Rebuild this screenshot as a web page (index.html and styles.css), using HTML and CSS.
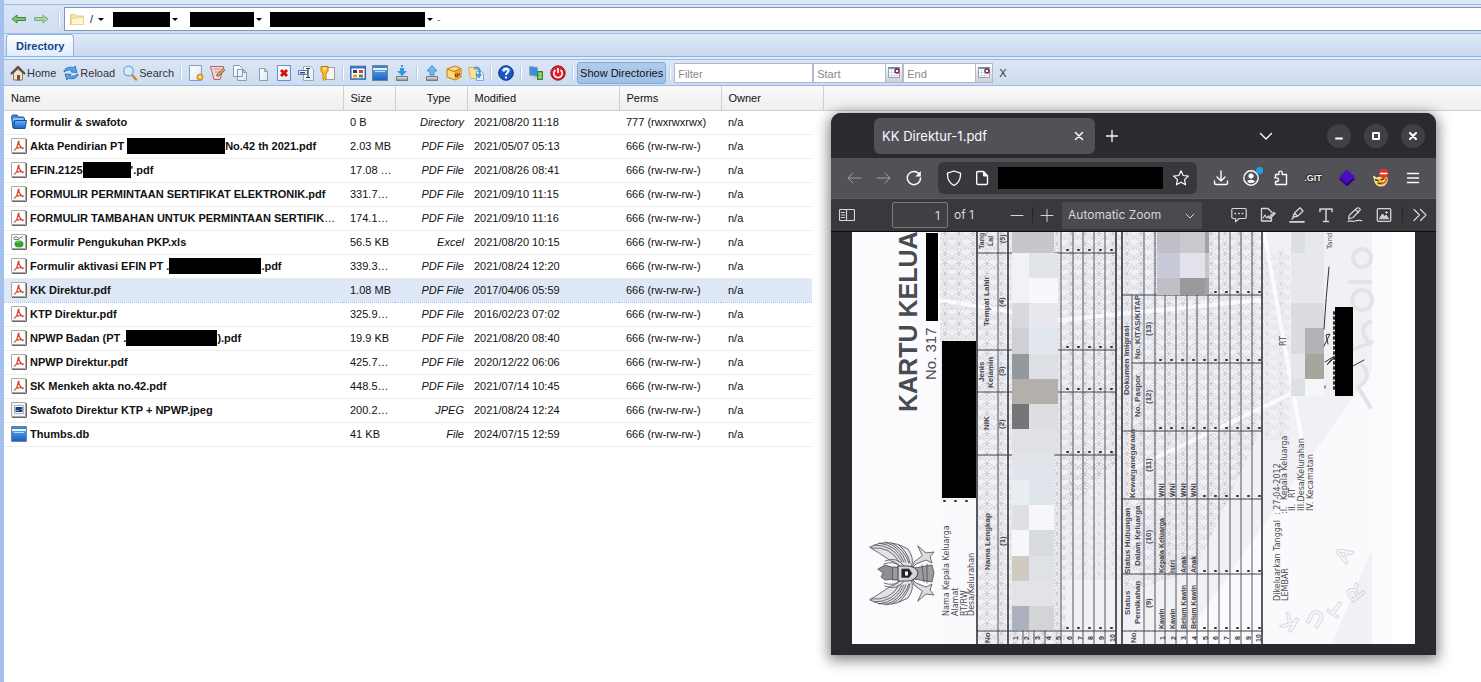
FILE: index.html
```html
<!DOCTYPE html>
<html lang="en">
<head>
<meta charset="utf-8">
<title>Directory</title>
<link rel="stylesheet" href="styles.css">
</head>
<body>
<svg class="defs" aria-hidden="true">
  <defs>
    <linearGradient id="gBlue" x1="0" y1="0" x2="0" y2="1"><stop offset="0" stop-color="#6db4f2"/><stop offset="1" stop-color="#1560c4"/></linearGradient>
    <linearGradient id="gPage" x1="0" y1="0" x2="1" y2="1"><stop offset="0" stop-color="#fff"/><stop offset="1" stop-color="#dfe8f2"/></linearGradient>
    <linearGradient id="gDrive" x1="0" y1="0" x2="0" y2="1"><stop offset="0" stop-color="#eee"/><stop offset="1" stop-color="#8a8a8a"/></linearGradient>
    <pattern id="guilloche" width="14" height="10" patternUnits="userSpaceOnUse"><g fill="none" stroke="#b9bac6" stroke-width=".6"><path d="M0 10a7 7 0 0 1 14 0M2.500 10a4.500 4.500 0 0 1 9 0M5 10a2 2 0 0 1 4 0M-7 5a7 7 0 0 1 14 0M7 5a7 7 0 0 1 14 0"/></g></pattern>
    <symbol id="pdf" viewBox="0 0 16 16"><path fill="#fdfdfd" stroke="#a9a9a9" d="M.5.5h14v14H.5z"/><path fill="none" stroke="#666" d="M1 15.500h14.500V1"/><path fill="none" stroke="#d24a35" stroke-width="1.300" d="M3 12.500c2.500-1.500 4-5 4.300-9M7 3.500h1.500M7.800 4c0 3 2 5.500 4.700 7M4.500 10.500c2.500-1 5-1.200 8-.5"/></symbol>
    <symbol id="window" viewBox="0 0 16 16"><path fill="url(#gBlue)" stroke="#74828f" d="M.5.5h15v15H.5z"/><path fill="#3f83d0" d="M1 1h14v2H1z"/><path fill="#e4f1ff" d="M1 3h14v2H1z"/><path fill="#b9dcff" d="M3 6h10v1H3z"/></symbol>
    <symbol id="cal" viewBox="0 0 14 14"><path fill="#fff" stroke="#8ba0c2" d="M1.500 2.500h11v9h-11z"/><path stroke="#d3dbe8" d="M4.500 3v8M7.500 3v8M2 6.500h10M2 9.500h10"/><path fill="#6b89bd" d="M1 1h12v1.500H1z"/><circle cx="10" cy="5" r="2" fill="#fff" stroke="#8e1230" stroke-width="1.300"/></symbol>
  </defs>
</svg>

<div class="manager">
  <nav class="pathbar" aria-label="Path">
    <button class="icon-btn" aria-label="Back"><svg viewBox="0 0 16 16"><path fill="#7cc474" stroke="#3d8b3b" d="M1 8l5-4v2.500h8.500v3H6V12z"/></svg></button>
    <button class="icon-btn" aria-label="Forward"><svg viewBox="0 0 16 16"><path fill="#a5d6a0" stroke="#79ae79" d="M15 8l-5-4v2.500H1.500v3H10V12z"/></svg></button>
    <span class="sep"></span>
    <div class="path">
      <svg class="path-folder" viewBox="0 0 16 16"><path fill="#f7e7ac" stroke="#e2cd84" d="M1.500 3.500h5l1 1.500h7v8.500h-13z"/><path fill="#fff6d4" stroke="#ead794" d="M2.500 7.500h5l1-1h6v7h-12z"/></svg>
      <span class="root">/</span><i class="caret"></i>
      <span class="mask crumb-a"></span><i class="caret"></i>
      <span class="mask crumb-b"></span><i class="caret"></i>
      <span class="mask crumb-c"></span><i class="caret"></i>
      <span class="dash">-</span>
    </div>
  </nav>

  <div class="tabs"><button class="tab">Directory</button></div>

  <div class="toolbar">
    <button class="tool"><svg viewBox="0 0 16 16"><path fill="#efe4d4" stroke="#8f7a67" d="M3.500 8v7h9V8L8 4z"/><path fill="#8a4b2b" d="M7 10h3v5.500H7z"/><path fill="none" stroke="#5d4637" stroke-width="2" d="M1 9l7-7 7 7"/></svg>Home</button>
    <button class="tool"><svg viewBox="0 0 16 16"><path fill="#5ea9ec" stroke="#1c5fb4" stroke-width=".8" d="M1 7c0-4 6-6 9.500-4L12 1l2 6.500L8 7l1.500-1.500C7 4.500 4 5 1 7zM15 9c0 4-6 6-9.500 4L4 15 2 9l6 .5L6.500 11c2.500 1 5.500 0 8.500-2z"/></svg>Reload</button>
    <button class="tool"><svg viewBox="0 0 16 16"><path stroke="#c98635" stroke-width="2.500" stroke-linecap="round" d="M10 10l4 4.500"/><circle cx="6.500" cy="6" r="4.800" fill="#d8ebfb" stroke="#83aede" stroke-width="1.500"/></svg>Search</button>
    <span class="sep"></span>
    <button class="icon-btn" aria-label="New file"><svg viewBox="0 0 16 16"><path fill="url(#gPage)" stroke="#7ba1cd" d="M1.500.5h12v15h-12z"/><circle cx="12" cy="12" r="3" fill="#f4b52c" stroke="#d3841c"/><circle cx="12" cy="12" r="1" fill="#fff"/></svg></button>
    <button class="icon-btn" aria-label="Edit"><svg viewBox="0 0 16 16"><path fill="#f3d8db" stroke="#b8606b" d="M.5 1.500h13L10 14.500H4z"/><path stroke="#b592a0" d="M4 4h7M5 7h5M6 10h3"/><path stroke="#7a5224" stroke-width="3" d="M7 11l7.500-7"/><path stroke="#f3b356" stroke-width="1.500" d="M7.500 10.500L14.500 4"/></svg></button>
    <button class="icon-btn" aria-label="Copy"><svg viewBox="0 0 16 16"><path fill="url(#gPage)" stroke="#8a9db2" d="M1.500.5h6l3 3v8h-9zM5.500 4.500h6l3 3v8h-9z"/><path fill="none" stroke="#8a9db2" d="M11.500 4.500v3h3"/></svg></button>
    <button class="icon-btn" aria-label="Move"><svg viewBox="0 0 16 16"><path fill="url(#gPage)" stroke="#8a9db2" d="M5.500 3.500h5l3 3v9h-8z"/><path fill="none" stroke="#8a9db2" d="M10.500 3.500v3h3"/></svg></button>
    <button class="icon-btn" aria-label="Delete"><svg viewBox="0 0 16 16"><path fill="url(#gPage)" stroke="#5f93cf" d="M1.500.5h13v15h-13z"/><path stroke="#d90f0f" stroke-width="3" d="M5 5l6 6M11 5l-6 6"/></svg></button>
    <button class="icon-btn" aria-label="Rename"><svg viewBox="0 0 16 16"><path fill="url(#gPage)" stroke="#9aa9ba" d="M5.500 1.500h7l3 3v11h-10z"/><path fill="#e7f0fb" stroke="#5b7fb3" d="M.5 5.500h9v4h-9z"/><path fill="#2b4f94" d="M2 7h5v1.500H2z"/><path fill="none" stroke="#333" d="M8 3.500h4M10 3.500v9M8 12.500h4"/></svg></button>
    <button class="icon-btn" aria-label="Permissions"><svg viewBox="0 0 16 16"><path fill="#f7f7f7" stroke="#9e9e9e" d="M5.500 2.500h9v12h-9z"/><path fill="#fbc22a" stroke="#c07f0d" d="M1 1.500h7v5L6 8v6l-1.500 1.500L3 14V8L1 6.500z"/><path fill="#fff" d="M3.500 3h2v1.500h-2z"/></svg></button>
    <span class="sep"></span>
    <button class="icon-btn" aria-label="Thumbnails"><svg viewBox="0 0 16 16"><path fill="#fff" stroke="#2e64b0" stroke-width="1.500" d="M.8 1.500h14.500v12.500H.8z"/><path fill="#3d73bd" d="M1 1h14v2.500H1z"/><path fill="#28417e" d="M3 5h4v3H3z"/><path fill="#e8372c" d="M9 5h4v3H9z"/><path fill="#ef9d28" d="M3 9.500h4v3H3z"/><path fill="#37a03f" d="M9 9.500h4v3H9z"/></svg></button>
    <button class="icon-btn" aria-label="View"><svg><use href="#window"/></svg></button>
    <button class="icon-btn" aria-label="Download"><svg viewBox="0 0 16 16"><path fill="url(#gDrive)" stroke="#777" d="M2.500 11.500h11v4h-11z"/><path fill="#2f9be5" d="M7 0h2v2H7zM6 3h4v3h3l-5 5-5-5h3z"/></svg></button>
    <span class="sep"></span>
    <button class="icon-btn" aria-label="Upload"><svg viewBox="0 0 16 16"><path fill="url(#gDrive)" stroke="#777" d="M2.500 11.500h11v4h-11z"/><path fill="#70b6ee" stroke="#2a86d2" stroke-width=".8" d="M6 10V6H3l5-5.500L13 6h-3v4z"/></svg></button>
    <button class="icon-btn" aria-label="Archive"><svg viewBox="0 0 16 16"><path fill="#ffd97b" stroke="#c17b16" d="M1 4l8-3 6 2.500v8.500l-6 3-8-3z"/><path fill="#f1a733" d="M8 6.500l7-3V12l-6 3z"/><path fill="none" stroke="#c17b16" d="M1 4l7 2.500 7-3"/><path fill="none" stroke="#7b3e0c" d="M9.500 9h2v2.500h-2zM13 8v3"/></svg></button>
    <button class="icon-btn" aria-label="Extract"><svg viewBox="0 0 16 16"><path fill="#f9e29a" stroke="#d1b25e" d="M.5 2.500h5l1 2h5v9h-9z"/><path fill="#e3f0fb" stroke="#7fa7d3" d="M8.500 6.500h5l2 2v7h-7z"/><path fill="none" stroke="#4598dd" stroke-width="2" d="M6 3c5-2 7 2 5 8M8 9l3 3 2-3"/></svg></button>
    <span class="sep"></span>
    <button class="icon-btn" aria-label="Help"><svg viewBox="0 0 16 16"><circle cx="8" cy="8" r="7.300" fill="#1b56c0" stroke="#0b2f83"/><path fill="#5c92e6" d="M3 5c2-4 8-4 10 0-3 2-7 2-10 0z"/><path fill="none" stroke="#fff" stroke-width="2" d="M5.500 6.500c0-3.500 5-3.500 5-.5 0 2-2.500 1.500-2.500 4M8 11.500v2"/></svg></button>
    <span class="sep"></span>
    <button class="icon-btn" aria-label="Switch"><svg viewBox="0 0 16 16"><path fill="#3b8be2" stroke="#8aa3bf" d="M1.500 1.500l8 1v9l-8-1.500z"/><path fill="#c5cdd5" d="M2 11l6 1 2 3-5-1z"/><path fill="#66bb4a" stroke="#36822a" d="M9.500 6.500h5v8h-5z"/><path stroke="#d8f2ca" d="M11 9h2.500M11 12h2.500"/></svg></button>
    <button class="icon-btn" aria-label="Logoff"><svg viewBox="0 0 16 16"><circle cx="8" cy="8" r="7.200" fill="#d9222a" stroke="#a60e17"/><path fill="none" stroke="#fff" stroke-width="1.600" d="M5.500 5a4.200 4.200 0 1 0 5 0M8 3v5"/></svg></button>
    <span class="sep"></span>
    <button class="show-dirs">Show Directories</button>
    <span class="sep"></span>
    <input class="field filter" type="text" placeholder="Filter" aria-label="Filter">
    <input class="field date" type="text" placeholder="Start" aria-label="Start"><button class="trigger" aria-label="Pick start"><svg><use href="#cal"/></svg></button>
    <input class="field date" type="text" placeholder="End" aria-label="End"><button class="trigger" aria-label="Pick end"><svg><use href="#cal"/></svg></button>
    <button class="clear">X</button>
  </div>

  <table class="files">
    <colgroup><col class="c-name"><col class="c-size"><col class="c-type"><col class="c-mod"><col class="c-perm"><col class="c-own"><col class="c-bar"><col></colgroup>
    <thead><tr><th>Name</th><th>Size</th><th class="t-head">Type</th><th>Modified</th><th>Perms</th><th colspan="2">Owner</th><th class="fill"></th></tr></thead>
    <tbody>
      <tr><td><div class="name"><svg viewBox="0 0 16 16"><path fill="#3f8ae6" stroke="#174f9f" d="M.5 2.500l1-1.500h4.500l1.500 2h5l1 1.500v9.500H2z"/><path fill="#8cc4fa" d="M2 4h10.500v3H2z"/><path fill="url(#gBlue)" stroke="#174f9f" d="M3.500 6.500h12l-1.500 8H3z"/></svg><b>formulir &amp; swafoto</b></div></td><td>0 B</td><td>Directory</td><td>2021/08/20 11:18</td><td>777 (rwxrwxrwx)</td><td>n/a</td></tr>
      <tr><td><div class="name"><svg><use href="#pdf"/></svg><b>Akta Pendirian PT</b><span class="mask m-a"></span><b>No.42 th 2021.pdf</b></div></td><td>2.03 MB</td><td>PDF File</td><td>2021/05/07 05:13</td><td>666 (rw-rw-rw-)</td><td>n/a</td></tr>
      <tr><td><div class="name"><svg><use href="#pdf"/></svg><b>EFIN.2125</b><span class="mask m-b"></span><b>'.pdf</b></div></td><td>17.08 …</td><td>PDF File</td><td>2021/08/26 08:41</td><td>666 (rw-rw-rw-)</td><td>n/a</td></tr>
      <tr><td><div class="name"><svg><use href="#pdf"/></svg><b>FORMULIR PERMINTAAN SERTIFIKAT ELEKTRONIK.pdf</b></div></td><td>331.7…</td><td>PDF File</td><td>2021/09/10 11:15</td><td>666 (rw-rw-rw-)</td><td>n/a</td></tr>
      <tr><td><div class="name"><svg><use href="#pdf"/></svg><b>FORMULIR TAMBAHAN UNTUK PERMINTAAN SERTIFIK</b>…</div></td><td>174.1…</td><td>PDF File</td><td>2021/09/10 11:16</td><td>666 (rw-rw-rw-)</td><td>n/a</td></tr>
      <tr><td><div class="name"><svg viewBox="0 0 16 16"><path fill="#fafafa" stroke="#a9a9a9" d="M.5.5h14v14H.5z"/><path fill="none" stroke="#666" d="M1 15.500h14.500V1"/><path fill="none" stroke="#777" d="M2 4.500l3-2 3 2 4-2M3 5.500h5"/><ellipse cx="8" cy="10" rx="4.500" ry="3.500" fill="#2fa52c"/><path fill="#84dc6e" d="M5 8.500c1-1.500 4-1.500 5 0z"/></svg><b>Formulir Pengukuhan PKP.xls</b></div></td><td>56.5 KB</td><td>Excel</td><td>2021/08/20 10:15</td><td>666 (rw-rw-rw-)</td><td>n/a</td></tr>
      <tr><td><div class="name"><svg><use href="#pdf"/></svg><b>Formulir aktivasi EFIN PT .</b><span class="mask m-c"></span><b>.pdf</b></div></td><td>339.3…</td><td>PDF File</td><td>2021/08/24 12:20</td><td>666 (rw-rw-rw-)</td><td>n/a</td></tr>
      <tr class="selected"><td><div class="name"><svg><use href="#pdf"/></svg><b>KK Direktur.pdf</b></div></td><td>1.08 MB</td><td>PDF File</td><td>2017/04/06 05:59</td><td>666 (rw-rw-rw-)</td><td>n/a</td></tr>
      <tr><td><div class="name"><svg><use href="#pdf"/></svg><b>KTP Direktur.pdf</b></div></td><td>325.9…</td><td>PDF File</td><td>2016/02/23 07:02</td><td>666 (rw-rw-rw-)</td><td>n/a</td></tr>
      <tr><td><div class="name"><svg><use href="#pdf"/></svg><b>NPWP Badan (PT .</b><span class="mask m-d"></span><b>).pdf</b></div></td><td>19.9 KB</td><td>PDF File</td><td>2021/08/20 08:40</td><td>666 (rw-rw-rw-)</td><td>n/a</td></tr>
      <tr><td><div class="name"><svg><use href="#pdf"/></svg><b>NPWP Direktur.pdf</b></div></td><td>425.7…</td><td>PDF File</td><td>2020/12/22 06:06</td><td>666 (rw-rw-rw-)</td><td>n/a</td></tr>
      <tr><td><div class="name"><svg><use href="#pdf"/></svg><b>SK Menkeh akta no.42.pdf</b></div></td><td>448.5…</td><td>PDF File</td><td>2021/07/14 10:45</td><td>666 (rw-rw-rw-)</td><td>n/a</td></tr>
      <tr><td><div class="name"><svg viewBox="0 0 16 16"><path fill="#f4f4f4" stroke="#a9a9a9" d="M.5.5h14v14H.5z"/><path fill="none" stroke="#666" d="M1 15.500h14.500V1"/><path fill="#fff" stroke="#9eb0c4" d="M3.500 3.500h9v8h-9z"/><path fill="#153b77" d="M4.500 5h7v5h-7z"/><path fill="#61a8e8" d="M4.500 8h4l3-1.500V8H8v1H4.500z"/></svg><b>Swafoto Direktur KTP + NPWP.jpeg</b></div></td><td>200.2…</td><td>JPEG</td><td>2021/08/24 12:24</td><td>666 (rw-rw-rw-)</td><td>n/a</td></tr>
      <tr><td><div class="name"><svg><use href="#window"/></svg><b>Thumbs.db</b></div></td><td>41 KB</td><td>File</td><td>2024/07/15 12:59</td><td>666 (rw-rw-rw-)</td><td>n/a</td></tr>
    </tbody>
  </table>
</div>

<section class="browser" aria-label="KK Direktur-1.pdf">
  <header class="titlebar">
    <div class="btab"><span>KK Direktur-1.pdf</span><button class="ib" aria-label="Close tab"><svg viewBox="0 0 16 16"><path d="M4.500 4.500l7 7M11.500 4.500l-7 7" stroke-width="1.500"/></svg></button></div>
    <button class="ib" aria-label="New tab"><svg viewBox="0 0 16 16"><path d="M8 2.500v11M2.500 8h11" stroke-width="1.300"/></svg></button>
    <button class="ib list-tabs" aria-label="List tabs"><svg viewBox="0 0 16 16"><path d="M2.500 5.500L8 11l5.500-5.500" stroke-width="1.400"/></svg></button>
    <button class="wc" aria-label="Minimize"><svg viewBox="0 0 16 16"><path d="M5 10.500h6" stroke-width="2"/></svg></button>
    <button class="wc" aria-label="Maximize"><svg viewBox="0 0 16 16"><path d="M5 5h6v6H5z" stroke-width="2"/></svg></button>
    <button class="wc" aria-label="Close"><svg viewBox="0 0 16 16"><path d="M5 5l6 6M11 5l-6 6" stroke-width="2.200"/></svg></button>
  </header>

  <div class="navbar">
    <button class="ib dim" aria-label="Back"><svg viewBox="0 0 16 16"><path d="M15 8H2M7 3L2 8l5 5"/></svg></button>
    <button class="ib dim" aria-label="Forward"><svg viewBox="0 0 16 16"><path d="M1 8h13M9 3l5 5-5 5"/></svg></button>
    <button class="ib" aria-label="Reload"><svg viewBox="0 0 16 16"><path d="M13.500 4.500A6.600 6.600 0 1 0 14.500 8" stroke-width="1.500"/><path d="M14.800 1v5.500H9.300z" fill="#fbfbfe" stroke="none"/></svg></button>
    <div class="urlbar">
      <svg viewBox="0 0 16 16"><path d="M8 1l6.500 2.200c.3 5.300-1.800 9.800-6.500 12.300C3.300 13 1.200 8.500 1.500 3.200z" stroke-width="1.300"/></svg>
      <svg viewBox="0 0 16 16"><path d="M3.800 1.500h5.500l4.200 4.200v7.500q0 1.300-1.300 1.300H4q-1.300 0-1.300-1.300V2.700q0-1.200 1.100-1.200z" stroke-width="1.400"/><path d="M9.500 1.500v4.500h4z" fill="#fbfbfe"/></svg>
      <span class="mask url"></span>
      <svg viewBox="0 0 16 16"><path d="M8 .8l2.200 4.700 5.200.6-3.900 3.500 1.100 5.200L8 12.200l-4.600 2.600 1.100-5.200L.6 6.100l5.200-.6z" stroke-width="1.200"/></svg>
    </div>
    <button class="ib" aria-label="Downloads"><svg viewBox="0 0 16 16"><path d="M8 1v9.500M4 7l4 4 4-4M1.500 11v2q0 1.500 1.500 1.500h10q1.500 0 1.500-1.500v-2" stroke-width="1.400"/></svg></button>
    <button class="ib badge" aria-label="Account"><svg viewBox="0 0 16 16"><circle cx="8" cy="8" r="7.200" stroke-width="1.400"/><circle cx="8" cy="6" r="2.200" fill="#fbfbfe"/><path d="M4 11.500q1-1.700 4-1.700t4 1.700q-1.500 1.500-4 1.500t-4-1.500z" fill="#fbfbfe" stroke="none"/></svg></button>
    <button class="ib" aria-label="Extensions"><svg viewBox="0 0 16 16"><path d="M2.500 7V4.500h3.300V2.800a1.700 1.700 0 0 1 3.400 0v1.700h4.300v10h-11V11.500h1.200a1.800 1.800 0 0 0 0-3.600H1.500" stroke-width="1.400"/></svg></button>
    <button class="ib ext git" aria-label="Git">.GIT</button>
    <button class="ib ext" aria-label="Layers"><svg viewBox="0 0 18 18"><path fill="#2a0580" stroke="none" d="M1 10l8-6 8 6-8 7.500z"/><path fill="#4a0fc0" stroke="none" d="M1 7.500L9 .5l8 7-8 7z"/></svg></button>
    <button class="ib ext" aria-label="Proxy"><svg viewBox="0 0 18 20"><path fill="#ffd45c" stroke="#fff3c4" d="M1 8l3 2 4-1 7-2 1 5q-1 7-7 7-6 0-7-6z"/><path d="M3 12l3 1M9 12l3-1M6 16h5" stroke="#6e3510" stroke-width="1.800"/><path d="M10 16q4 0 5-5" stroke="#c96f1e" stroke-width="2"/><circle cx="12" cy="5" r="5.200" fill="#e5342e" stroke="none"/><path d="M8.500 5h7" stroke="#fff" stroke-width="1.800"/></svg></button>
    <button class="ib" aria-label="Menu"><svg viewBox="0 0 16 16"><path d="M2.500 3.500h11M2.500 8h11M2.500 12.500h11" stroke-width="1.500"/></svg></button>
  </div>

  <div class="pdfbar">
    <button class="ib" aria-label="Sidebar"><svg viewBox="0 0 16 16"><path d="M1.500 2.500h13q1 0 1 1v9q0 1-1 1h-13q-1 0-1-1v-9q0-1 1-1zM7.500 2.500v11M2.500 5.500h3M2.500 8h3M2.500 10.500h3" stroke-width="1.200"/></svg></button>
    <input class="page-no" type="text" value="1" aria-label="Page"><span class="of">of 1</span>
    <button class="ib minus" aria-label="Zoom out"><svg viewBox="0 0 16 16"><path d="M2 8.500h12"/></svg></button>
    <button class="ib plus" aria-label="Zoom in"><svg viewBox="0 0 16 16"><path d="M2 8.500h12M8 2.500v12"/></svg></button>
    <div class="zoom"><select aria-label="Zoom"><option>Automatic Zoom</option></select><svg viewBox="0 0 10 10"><path d="M1 3l4 4 4-4"/></svg></div>
    <div class="edit">
      <button class="ib" aria-label="Comment"><svg viewBox="0 0 16 16"><path d="M2 1.500h12q1.200 0 1.200 1.200v7.600q0 1.200-1.200 1.200H8l-3.500 3.300v-3.300H2q-1.200 0-1.200-1.200V2.700q0-1.200 1.200-1.200z" stroke-width="1.200"/><path d="M4 6.500h.500M7.700 6.500h.5M11.200 6.500h.5" stroke-width="1.600"/></svg></button>
      <button class="ib" aria-label="Signature"><svg viewBox="0 0 16 16"><path d="M11.500 5L8 1.500H1.500v12.500h10v-3" stroke-width="1.300"/><path d="M3 11l2-3 1.500 3 2-2" stroke-width="1.100"/><path d="M8.500 10.500l5-5.500 2 1.500-5 5z" fill="#bbb"/></svg></button>
      <button class="ib" aria-label="Highlight"><svg viewBox="0 0 16 16"><path d="M4 10l1.500-4L11 .8 14 4 8.500 9.300zM5.500 6l3 3.300M3 12l2-2" stroke-width="1.300"/><path d="M1 14.800h14" stroke-width="1.800"/></svg></button>
      <button class="ib" aria-label="Text"><svg viewBox="0 0 16 16"><path d="M2 4.500V2h12v2.500M8 2v12.500M5.500 14.500h5" stroke-width="1.500"/></svg></button>
      <button class="ib" aria-label="Draw"><svg viewBox="0 0 16 16"><path d="M1.500 12l1-4L10 1q2-.8 3.500 1.500L6 10.500zM8.500 2.500l3 3M1 14.500c3-2 4 1 7-.5s4 0 7-.5" stroke-width="1.200"/></svg></button>
      <button class="ib" aria-label="Image"><svg viewBox="0 0 16 16"><path d="M2.300 1.700h11.400q1 0 1 1v10.600q0 1-1 1H2.300q-1 0-1-1V2.700q0-1 1-1z" stroke-width="1.300"/><path d="M3.500 11.500L6.500 7l2 2.500L10 8l2.500 3.500z" fill="#d0d0d4"/><circle cx="10.500" cy="5.500" r=".8" fill="#d0d0d4"/></svg></button>
    </div>
    <button class="ib more" aria-label="More"><svg viewBox="0 0 16 16"><path d="M2 2.500L7.500 8 2 13.500M8.500 2.500L14 8l-5.500 5.500" stroke-width="1.200"/></svg></button>
  </div>

  <div class="viewer">
    <svg class="doc" viewBox="852 232 563 412" role="img" aria-label="Scanned page">
      <path fill="#fff" d="M852 232h563v412H852z"/>
      <path fill="#fbfbfd" d="M852 232h90v412h-90zM1372 232h20v412h-20z"/>
      <path fill="#f1f1f5" d="M940 232h432v412H940z"/>
      <path fill="url(#guilloche)" d="M940 232h186v220l-60 60v132h-89V342h-37zM1122 232h142v190l-70 150-70 20z"/>
      <path fill="url(#guilloche)" opacity=".6" d="M1060 450h62v130h-62zM1264 250h26v190h-26z"/>
      <path fill="#fff" opacity=".65" d="M1180 644L1372 370v180l-40 94zM940 500h36v144h-36z"/>
      <path fill="none" stroke="#fff" stroke-width="4" opacity=".75" d="M940 300l120 20 200-20M1264 232l40 220M1130 470l190-90"/>
      <g fill="none" stroke="#c5c6cd" stroke-width=".8" font-family="Liberation Sans" font-weight="bold" font-size="22" opacity=".7">
        <text transform="translate(1300 620) rotate(-150)">K</text>
        <text transform="translate(1326 616) rotate(-150)">U</text>
        <text transform="translate(1346 606) rotate(-145)">T</text>
        <text transform="translate(1366 594) rotate(-130)">R</text>
        <text transform="translate(1346 565) rotate(-60)">A</text>
      </g>
      <g fill="none" stroke="#e2e3e7" stroke-width="4"><circle cx="1362" cy="258" r="9"/><circle cx="1362" cy="300" r="10"/><path d="M1350 282h20M1370 322q-14 6 0 22M1352 350l20-8M1362 365q12 12-4 22l12 20"/></g>

      <g stroke="#55565e" stroke-width="1" fill="none">
        <path d="M998 232v412M1061 232v412M1073 232v412M1083 232v412M1094 232v412M1105 232v412"/>
        <path d="M1132 295v136M1144 232v412M1155 232v412M1165 232v412M1176 232v412M1187 232v412M1197 232v412M1208 232v412M1219 232v412M1230 232v412M1241 232v412M1252 232v412"/>
        <path d="M1023 631v13M1034 631v13M1045 631v13"/>
      </g>
      <g stroke="#33343b" stroke-width="1.600" fill="none"><path d="M977 232v412M1008 232v412M1116 232v412M1122 232v412M1262 232v412"/></g>
      <g stroke="#3f4047" stroke-width="1.200" stroke-dasharray="5 1" fill="none"><path d="M977 253h139M977 350h139M977 392h139M977 455h139M977 631h139M1122 295h140M1132 363h130M1122 431h140M1122 499h140M1122 574h140M1122 631h140"/></g>
      <g stroke="#33343b" stroke-width="2" stroke-dasharray="1 10" fill="none"><path d="M1067 250h49M1067 347h49M1067 389h49M1067 452h49M1067 628h49M1160 292h100M1160 360h100M1160 428h100M1204 496h56M1204 571h56M1204 628h56M944 501h32"/></g>

      <g class="scan bold">
        <text class="heading" transform="translate(917 412) rotate(-90)">KARTU KELUA</text>
        <text class="number" transform="translate(936 380) rotate(-90)">No. 317</text>
        <text class="tight" transform="translate(984 249) rotate(-90)">Tang</text><text class="tight" transform="translate(993 246) rotate(-90)">Lal</text><text class="tight" transform="translate(1005 243) rotate(-90)">(5)</text>
        <text transform="translate(989 326) rotate(-90)">Tempat Lahir</text><text transform="translate(1004 307) rotate(-90)">(4)</text>
        <text transform="translate(984 382) rotate(-90)">Jenis</text><text transform="translate(993 388) rotate(-90)">Kelamin</text><text transform="translate(1004 376) rotate(-90)">(3)</text>
        <text transform="translate(989 430) rotate(-90)">NIK</text><text transform="translate(1004 429) rotate(-90)">(2)</text>
        <text transform="translate(990 570) rotate(-90)">Nama Lengkap</text><text transform="translate(1005 546) rotate(-90)">(1)</text>
        <text transform="translate(990 643) rotate(-90)">No</text>
        <text transform="translate(1129 395) rotate(-90)">Dokumen Imigrasi</text>
        <text transform="translate(1140 359) rotate(-90)">No. KITAS/KITAP</text><text transform="translate(1151 336) rotate(-90)">(13)</text>
        <text transform="translate(1140 417) rotate(-90)">No. Paspor</text><text transform="translate(1151 404) rotate(-90)">(12)</text>
        <text transform="translate(1135 498) rotate(-90)">Kewarganegaraan</text><text transform="translate(1151 472) rotate(-90)">(11)</text>
        <text transform="translate(1130 574) rotate(-90)">Status Hubungan</text><text transform="translate(1140 566) rotate(-90)">Dalam Keluarga</text><text transform="translate(1151 544) rotate(-90)">(10)</text>
        <text transform="translate(1130 615) rotate(-90)">Status</text><text transform="translate(1140 624) rotate(-90)">Pernikahan</text><text transform="translate(1151 608) rotate(-90)">(9)</text>
        <text transform="translate(1136 643) rotate(-90)">No.</text>
      </g>
      <g class="scan small">
        <text transform="translate(1018 640) rotate(-90)">1</text><text transform="translate(1029 640) rotate(-90)">2</text><text transform="translate(1040 640) rotate(-90)">3</text><text transform="translate(1051 640) rotate(-90)">4</text><text transform="translate(1061 640) rotate(-90)">5</text><text transform="translate(1072 640) rotate(-90)">6</text><text transform="translate(1083 640) rotate(-90)">7</text><text transform="translate(1093 640) rotate(-90)">8</text><text transform="translate(1104 640) rotate(-90)">9</text><text transform="translate(1115 642) rotate(-90)">10</text>
        <text transform="translate(1165 640) rotate(-90)">1</text><text transform="translate(1176 640) rotate(-90)">2</text><text transform="translate(1186 640) rotate(-90)">3</text><text transform="translate(1197 640) rotate(-90)">4</text><text transform="translate(1208 640) rotate(-90)">5</text><text transform="translate(1218 640) rotate(-90)">6</text><text transform="translate(1229 640) rotate(-90)">7</text><text transform="translate(1240 640) rotate(-90)">8</text><text transform="translate(1251 640) rotate(-90)">9</text><text transform="translate(1261 642) rotate(-90)">10</text>
        <text transform="translate(1164 629) rotate(-90)">Kawin</text><text transform="translate(1175 629) rotate(-90)">Kawin</text><text transform="translate(1186 629) rotate(-90)">Belum Kawin</text><text transform="translate(1196 629) rotate(-90)">Belum Kawin</text>
        <text transform="translate(1164 573) rotate(-90)">Kepala Keluarga</text><text transform="translate(1175 573) rotate(-90)">Istri</text><text transform="translate(1186 573) rotate(-90)">Anak</text><text transform="translate(1196 573) rotate(-90)">Anak</text>
        <text transform="translate(1164 497) rotate(-90)">WNI</text><text transform="translate(1175 497) rotate(-90)">WNI</text><text transform="translate(1186 497) rotate(-90)">WNI</text><text transform="translate(1196 497) rotate(-90)">WNI</text>
      </g>
      <g class="scan form">
        <text transform="translate(949 616) rotate(-90)">Nama Kepala Keluarga</text><text transform="translate(958 616) rotate(-90)">Alamat</text><text transform="translate(967 616) rotate(-90)">RT/RW</text><text transform="translate(974 616) rotate(-90)">Desa/Kelurahan</text>
        <text transform="translate(1280 601) rotate(-90)">Dikeluarkan Tanggal</text><text transform="translate(1280 515) rotate(-90)">: 27-04-2012</text>
        <text transform="translate(1288 601) rotate(-90)">LEMBAR</text><text transform="translate(1287 514) rotate(-90)">:I.</text><text transform="translate(1287 500) rotate(-90)">Kepala Keluarga</text>
        <text transform="translate(1295 511) rotate(-90)">II.</text><text transform="translate(1295 498) rotate(-90)">RT</text>
        <text transform="translate(1304 511) rotate(-90)">III.Desa/Kelurahan</text><text transform="translate(1313 511) rotate(-90)">IV. Kecamatan</text>
        <text transform="translate(1286 346) rotate(-90)">RT</text><text class="tight" transform="translate(1332 249) rotate(-90)">Tand</text>
      </g>

      <g fill="none" stroke="#4c4d52" stroke-width=".8">
        <g id="wing"><path fill="#e3e3e6" d="M870 547q18-10 38 2 7 10 3 18l-8 5q-3-9-12-11l-12-8z"/><path d="M871 548q20-2 28 14M874 545q20 0 28 17M879 543q18 2 25 19M885 542q16 5 21 20M892 543q13 7 17 20M899 545q9 8 11 18"/><path d="M885 561q12-5 19 5M884 564q10-4 17 3"/><path fill="#ddd" d="M918 546l8 7 8-1-4 5 2 6-6-3-10 4-4 4 2-6 8-6z"/></g>
        <use href="#wing" transform="translate(0 1147) scale(1 -1)"/>
        <path fill="#8e8f93" d="M878 569l7-4 10 3v11l-10 1-4-3 2-4z"/>
        <path fill="#9c9da1" d="M893 567h14v13h-14zM914 568l18-3 2 8-2 9-18-3z"/>
        <path fill="#d5d5d8" stroke-width="1.200" d="M898 566h10q9 1 10 7-1 7-10 8h-10z"/><path fill="#222" d="M902 569h7l3 4.500-3 4h-7z"/><path fill="#fff" stroke="none" d="M905 571.500h3v4h-3z"/>
        <path d="M922 565l2 17M927 564v19"/>
      </g>

      <g>
        <path fill="#c7c7cb" d="M1012 232h42v21h-42z"/><path fill="#f2f2f6" d="M1012 253h17v50h-17z"/><path fill="#e1e4e9" d="M1029 253h29v25h-29z"/><path fill="#f7f7fc" d="M1029 278h29v25h-29z"/>
        <path fill="#d8d9de" d="M1012 303h17v25h-17z"/><path fill="#e7e7ed" d="M1029 303h29v25h-29z"/><path fill="#ced0d6" d="M1012 328h17v26h-17z"/><path fill="#e2e6ee" d="M1029 328h29v26h-29z"/>
        <path fill="#91999d" d="M1012 354h17v25h-17z"/><path fill="#dedee5" d="M1029 354h29v25h-29z"/><path fill="#b3afaa" d="M1012 379h46v25h-46z"/><path fill="#767678" d="M1012 404h17v25h-17z"/><path fill="#dedee2" d="M1029 404h29v25h-29z"/>
        <path fill="#e1e0e5" d="M1012 429h46v25h-46z"/><path fill="#e1e4ea" d="M1012 454h42v26h-42z"/><path fill="#e9eef0" d="M1012 480h17v25h-17z"/><path fill="#dfe4ea" d="M1029 480h25v25h-25z"/>
        <path fill="#e0e0e4" d="M1012 505h17v25h-17z"/><path fill="#f7f7fb" d="M1029 505h25v25h-25zM1012 530h17v26h-17z"/><path fill="#d9dcdf" d="M1029 530h25v26h-25z"/><path fill="#d0cac0" d="M1012 556h17v25h-17z"/><path fill="#dee2e6" d="M1029 556h25v25h-25z"/>
        <path fill="#e3e3e7" d="M1012 581h42v25h-42z"/><path fill="#acb1be" d="M1012 606h17v24h-17z"/><path fill="#d3d4d6" d="M1029 606h25v24h-25z"/>
        <path fill="#bfbfc5" d="M1157 232h23v63h-23z"/><path fill="#c8cad8" d="M1157 253h23v25h-23z"/><path fill="#c9c9ce" d="M1180 232h25v21h-25z"/><path fill="#e3e1eb" d="M1180 253h25v25h-25z"/><path fill="#9a9a9d" d="M1180 278h25v17h-25z"/><path fill="#a3a3a7" d="M1205 232h4v21h-4zM1205 278h4v17h-4z"/><path fill="#c5c5ca" d="M1205 253h4v25h-4z"/>
        <path fill="#e6e8ec" d="M1291 232h33v71h-33z"/><path fill="#dbdfe3" d="M1291 232h14v21h-14z"/><path fill="#dcdce0" d="M1291 303h33v51h-33z"/><path fill="#b2b2b7" d="M1305 328h19v26h-19z"/><path fill="#e5e7ea" d="M1291 354h14v25h-14z"/><path fill="#a5a69c" d="M1305 354h19v25h-19z"/><path fill="#dbe0e2" d="M1291 379h14v17h-14z"/><path fill="#f6f6fa" d="M1305 379h19v17h-19z"/>
      </g>
      <path fill="none" stroke="#303036" d="M1329 267q-3 30-5 62M1324 346l6-12-4 1 2 9M1325 362l8-5-6 8 8-8M1325 388v-2M1353 366l11-6"/>
      <path fill="none" stroke="#303036" stroke-width="2" stroke-dasharray="2 3" d="M1334 312v78"/>
      <path fill="#000" d="M926 233h12v88h-12zM942 341h34v157h-34zM1335 307h18v89h-18z"/>
    </svg>
  </div>
</section>
</body>
</html>
```
FILE: styles.css
```css
* { box-sizing: border-box; }
html, body { height: 100%; }
body {
  margin: 0;
  background: #dfe8f6;
  font: 11px/14px "Liberation Sans", Arial, sans-serif;
  color: #111;
  overflow: hidden;
}
button, input, select { font: inherit; color: inherit; margin: 0; }
button { border: 0; background: none; padding: 0; }
svg { display: block; flex: none; width: 16px; height: 16px; }
.defs { position: absolute; width: 0; height: 0; }
.mask { background: #000; flex: none; }

/* File manager */
.manager {
  min-height: 100%;
  padding-top: 4px;
  border-left: 4px solid #a3c1ec;
  background: #dfe8f6;
  display: flex;
  flex-direction: column;
}
.pathbar {
  display: flex;
  align-items: center;
  height: 29px;
  padding-left: 4px;
  border-top: 1px solid #99bbe8;
  background: linear-gradient(#dbe6f5, #d0def0);
}
.icon-btn { padding: 0 3px; flex: none; }
.sep {
  flex: none;
  width: 2px;
  height: 14px;
  margin: 0 3px;
  border-left: 1px solid #b4cdf0;
  border-right: 1px solid #fff;
}
.pathbar .sep { margin: 0 4px 0 6px; }
.path {
  flex: 1;
  display: flex;
  align-items: center;
  height: 24px;
  padding-left: 4px;
  border: 1px solid #8496b4;
  border-right: 0;
  background: #fff;
}
.root { margin: 0 3px 0 5px; }
.caret { margin: 0 2px; border: 3px solid transparent; border-top-color: #000; border-bottom: 0; }
.path .mask { height: 15px; }
.crumb-a { width: 57px; margin-left: 7px; }
.crumb-b { width: 64px; margin-left: 10px; }
.crumb-c { width: 155px; margin-left: 6px; }
.dash { margin-left: 2px; color: #777; }

.tabs {
  display: flex;
  align-items: flex-end;
  height: 27px;
  padding: 1px 2px 3px;
  border-top: 1px solid #99bbe8;
  border-bottom: 1px solid #99bbe8;
  background: linear-gradient(#dfeaf8, #cad9ec 22px, #8db2e3 22px, #8db2e3 23px, #deecfd 23px);
}
.tab {
  height: 22px;
  padding: 0 9px;
  border: 1px solid #8db2e3;
  border-bottom: 0;
  border-radius: 4px 4px 0 0;
  background: linear-gradient(#fff, #deecfd);
  color: #15428b;
  font-weight: bold;
}

.toolbar {
  display: flex;
  align-items: center;
  height: 26px;
  padding-left: 3px;
  border-bottom: 1px solid #99bbe8;
  background: linear-gradient(#dbe6f5, #cedcef);
  color: #333;
}
.tool { display: flex; align-items: center; gap: 1px; padding: 0 4px 0 3px; }
.tool + .sep { margin-left: 2px; }
.show-dirs {
  height: 22px;
  padding: 0 2px;
  border: 1px solid #86a9d6;
  border-radius: 3px;
  background: linear-gradient(#b2cbea, #9dbfe8);
  color: #111;
}
.field {
  height: 20px;
  padding: 2px 3px 0;
  border: 1px solid #b5b8c8;
  background: #fff;
  border-radius: 0;
}
.field::placeholder { color: #8a8a8a; }
.filter { width: 139px; }
.date { width: 73px; }
.trigger {
  width: 17px;
  height: 20px;
  padding: 2px 1px;
  border: 1px solid #b5b8c8;
  border-left: 0;
  background: linear-gradient(#fff, #d0d0d4);
}
.trigger svg { width: 14px; height: 14px; }
.clear { padding-left: 6px; }

.files { width: 100%; table-layout: fixed; border-collapse: collapse; background: #fff; }
.manager::after { content: ""; flex: 1; background: #fff; }
.c-name { width: 339px; }
.c-size { width: 52px; }
.c-type { width: 72px; }
.c-mod { width: 152px; }
.c-perm { width: 102px; }
.c-own { width: 91px; }
.c-bar { width: 11px; }
th {
  height: 24px;
  padding: 0 7px;
  border-right: 1px solid #d0d0d0;
  border-bottom: 1px solid #d0d0d0;
  background: linear-gradient(#f9f9f9, #efefef);
  font-weight: normal;
  text-align: left;
}
th.t-head { padding-right: 16px; text-align: right; }
th.fill { border-right: 0; }
td {
  height: 24px;
  padding: 4px 3px 2px 7px;
  border-bottom: 1px solid #ededed;
  vertical-align: top;
  white-space: nowrap;
}
td:nth-child(1) { padding: 3px 0 0 7px; }
td:nth-child(3) { font-style: italic; text-align: right; }
.name { display: flex; align-items: center; height: 17px; }
.name svg { margin-right: 3px; }
.name b { white-space: pre; }
.name .mask { height: 16px; align-self: flex-start; }
.m-a { width: 98px; margin-left: 3px; }
.m-b { width: 48px; }
.m-c { width: 92px; }
.m-d { width: 91px; }
.selected td { background: #dfe8f6; border-top: 1px dotted #a3bae9; border-bottom: 1px dotted #a3bae9; }

/* Browser window, floating over the file manager */
.browser {
  position: absolute;
  left: 831px;
  top: 113px;
  width: 605px;
  border-radius: 10px 10px 0 0;
  background: #2b2a2f;
  box-shadow: 0 3px 14px 2px rgba(0, 0, 0, .5);
  color: #fbfbfe;
  font-family: Inter, sans-serif;
  overflow: hidden;
}
.browser svg { fill: none; stroke: currentColor; stroke-linecap: round; stroke-linejoin: round; }
.ib { flex: none; }
.titlebar {
  display: flex;
  align-items: center;
  height: 45px;
  padding: 0 11px 0 43px;
  background: #2b2a31;
  font-size: 13px;
}
.btab {
  display: flex;
  align-items: center;
  justify-content: space-between;
  width: 221px;
  height: 36px;
  margin-right: 9px;
  padding: 0 8px;
  border-radius: 6px;
  background: #525157;
}
.list-tabs { margin-left: auto; margin-right: 53px; }
.wc {
  display: grid;
  place-items: center;
  width: 24px;
  height: 24px;
  margin-left: 13px;
  border-radius: 50%;
  background: #414045;
}
.list-tabs + .wc { margin-left: 0; }
.navbar {
  display: flex;
  align-items: center;
  gap: 14px;
  height: 41px;
  padding: 0 15px;
  border-bottom: 1px solid #5d5c61;
  background: #525157;
}
.dim { color: #a09fa5; }
.ext { display: grid; place-items: center; width: 20px; }
.ext svg { width: 18px; height: 18px; }
.urlbar {
  flex: 1;
  display: flex;
  align-items: center;
  gap: 12px;
  height: 32px;
  margin-left: 2px;
  margin-right: 2px;
  padding: 0 8px;
  border-radius: 6px;
  background: #38373c;
}
.url { flex: 1; height: 22px; margin: 0 -2px 0 -4px; }
.badge { position: relative; }
.badge::after {
  content: "";
  position: absolute;
  right: -4px;
  top: -3px;
  width: 7px;
  height: 7px;
  border-radius: 50%;
  background: #1aa3e0;
}
.git { font: bold 9px/16px "Liberation Sans", sans-serif; text-shadow: 0 0 2px #000, 0 0 2px #000; }
.pdfbar {
  display: flex;
  align-items: center;
  height: 33px;
  padding: 0 8px;
  border-bottom: 1px solid #0c0c0d;
  background: #38383d;
  color: #d6d6da;
  font-size: 12px;
}
.page-no {
  width: 56px;
  height: 26px;
  margin-left: 37px;
  padding: 0 7px;
  border: 1px solid #7a7a7e;
  border-radius: 2px;
  background: #404044;
  text-align: right;
}
.of { width: 23px; margin-left: 6px; white-space: nowrap; }
.minus { margin-left: 32px; }
.plus { margin-left: 7px; padding-left: 6px; border-left: 1px solid #252529; }
.zoom { position: relative; margin-left: 7px; }
.zoom select {
  appearance: none;
  width: 140px;
  height: 27px;
  padding: 0 6px;
  border: 0;
  border-radius: 1px;
  background: #4a4a4f;
}
.zoom svg { position: absolute; right: 7px; top: 9px; width: 10px; height: 10px; pointer-events: none; }
.edit { display: flex; gap: 13px; margin-left: auto; }
.more { margin-left: 10px; padding-left: 9px; border-left: 1px solid #252529; }
.viewer { padding: 0 21px 11px; background: #2a2a2e; }
.browser .doc { width: 100%; height: auto; stroke: none; }
.scan text { fill: #3a3b42; stroke: none; font-family: "DejaVu Sans", sans-serif; font-size: 7px; }
.scan.bold text { font-family: "Liberation Sans", sans-serif; font-weight: bold; font-size: 8px; fill: #4a4b52; }
.scan.small text { font-family: "Liberation Sans", sans-serif; font-weight: bold; }
.scan.form text { font-size: 8px; fill: #4a4b52; }
.scan.bold .heading { font-size: 25px; }
.scan.bold .number { font-size: 15px; font-weight: normal; }
.scan.bold .tight, .scan.form .tight { font-size: 7px; }
```
